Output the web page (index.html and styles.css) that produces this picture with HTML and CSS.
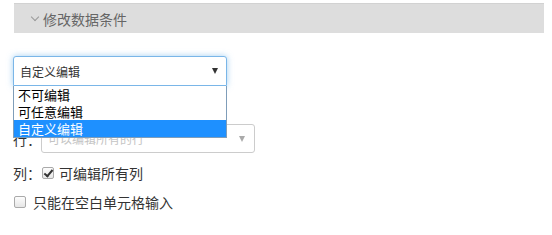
FILE: index.html
```html
<!DOCTYPE html>
<html lang="zh-CN">
<head>
  <meta charset="UTF-8">
  <title>修改数据条件</title>
  <link rel="stylesheet" href="styles.css">
</head>
<body>
  <div class="panel-heading">
    <span class="chevron"></span>
    <span class="panel-title">修改数据条件</span>
  </div>

  <div class="form-area">
    <div class="mode-wrap">
      <div class="select focused">
        <span class="select-text">自定义编辑</span>
        <span class="caret"></span>
      </div>
      <ul class="dropdown">
        <li>不可编辑</li>
        <li>可任意编辑</li>
        <li class="active">自定义编辑</li>
      </ul>
    </div>

    <div class="line row-line">
      <span class="label">行：</span>
      <div class="select small">
        <span class="placeholder">可以编辑所有的行</span>
        <span class="caret light"></span>
      </div>
    </div>

    <div class="line col-line">
      <span class="label">列：</span>
      <span class="checkbox checked"></span>
      <span class="check-text">可编辑所有列</span>
    </div>

    <div class="line blank-line">
      <span class="checkbox"></span>
      <span class="check-text wide">只能在空白单元格输入</span>
    </div>
  </div>
</body>
</html>
```

FILE: styles.css
```css
body {
  margin: 0;
  padding: 0;
  background: #fff;
  color: #333;
  font-family: "Noto Sans CJK SC", "Liberation Sans", sans-serif;
  font-size: 14px;
}
.panel-heading {
  margin: 3px 8px 0 14px;
  height: 29px;
  background: #dddddd;
  border-top: 1px solid #d2d2d2;
  display: flex;
  align-items: center;
  padding-left: 16px;
  color: #666;
}
.chevron {
  width: 5px;
  height: 5px;
  border-right: 1px solid #999;
  border-bottom: 1px solid #999;
  transform: rotate(45deg);
  margin: -4px 5px 0 2px;
}
.panel-title {
  font-size: 14px;
  color: #666;
}
.form-area {
  padding-left: 13px;
}
.mode-wrap {
  position: relative;
  width: 214px;
  margin-top: 23px;
}
.select {
  box-sizing: border-box;
  height: 30px;
  border: 1px solid #ccc;
  border-radius: 3px;
  background: #fff;
  display: flex;
  align-items: center;
  padding: 0 8px 0 6px;
}
.select.focused {
  border-color: #7ab6e8;
  box-shadow: 0 0 6px rgba(102, 175, 233, 0.6);
  border-radius: 3px 3px 0 0;
}
.select-text {
  flex: 1;
  font-size: 12px;
  color: #333;
}
.placeholder {
  flex: 1;
  font-size: 12px;
  color: #c4c4c4;
}
.caret {
  width: 0;
  height: 0;
  border-left: 3px solid transparent;
  border-right: 3px solid transparent;
  border-top: 6px solid #333;
}
.caret.light {
  border-top-color: #aaa;
}
.dropdown {
  position: absolute;
  top: 30px;
  left: 0;
  width: 214px;
  box-sizing: border-box;
  margin: 0;
  padding: 0;
  list-style: none;
  background: #fff;
  border: 1px solid #7f9db9;
  border-top: none;
  z-index: 2;
}
.dropdown li {
  height: 17px;
  line-height: 17px;
  padding-left: 4px;
  font-size: 13px;
  color: #000;
}
.dropdown li.active {
  background: #1e90ff;
  color: #fff;
}
.line {
  display: flex;
  align-items: center;
}
.row-line {
  margin-top: 38px;
}
.row-line .select {
  width: 214px;
  height: 29px;
  padding-right: 9px;
}
.label {
  width: 28px;
  color: #333;
}
.col-line {
  margin-top: 10px;
  height: 20px;
}
.blank-line {
  margin-top: 9px;
  height: 20px;
}
.checkbox {
  box-sizing: border-box;
  width: 12px;
  height: 12px;
  border: 1px solid #aaa;
  border-radius: 2px;
  background: linear-gradient(#fdfdfd, #e6e6e6);
  position: relative;
  margin-left: 1px;
}
.checkbox.checked::after {
  content: "";
  position: absolute;
  left: 3px;
  top: 0px;
  width: 3px;
  height: 7px;
  border-right: 2px solid #333;
  border-bottom: 2px solid #333;
  transform: rotate(40deg);
}
.check-text {
  margin-left: 5px;
  color: #333;
}
.check-text.wide {
  margin-left: 7px;
}
```
